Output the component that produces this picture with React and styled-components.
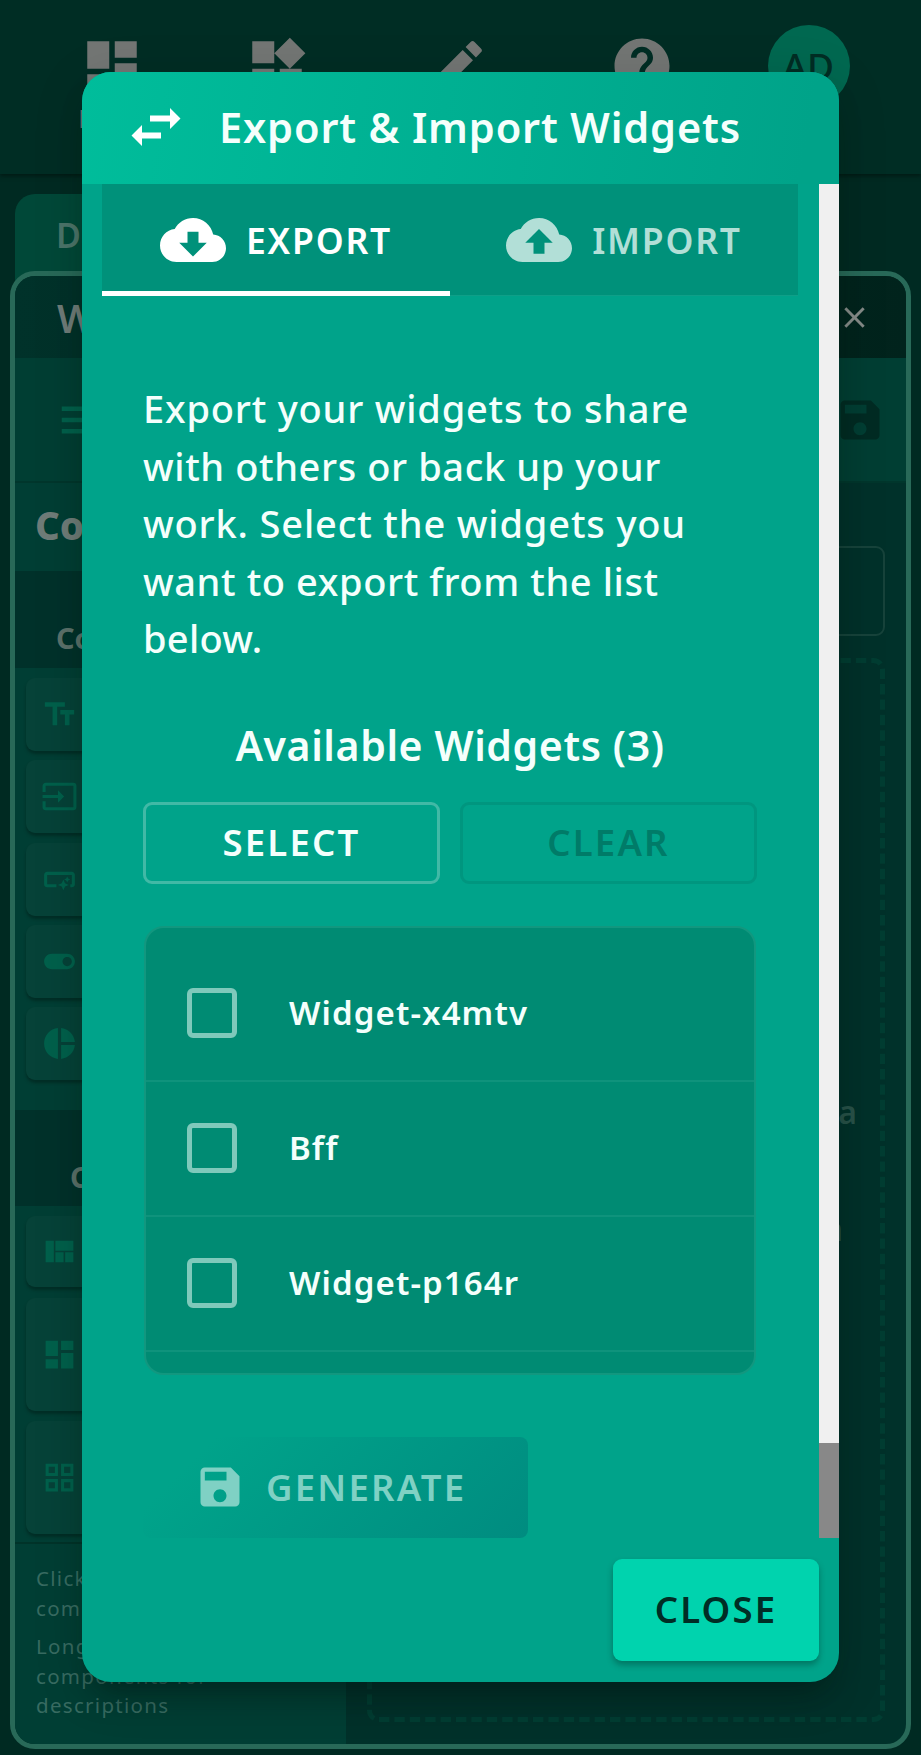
import React from 'react';
import styled, { createGlobalStyle } from 'styled-components';
import {
  MdDashboard, MdWidgets, MdEdit, MdHelp, MdTextFields, MdInput, MdSmartButton,
  MdToggleOn, MdPieChart, MdViewQuilt, MdGridView, MdSave, MdClose, MdMenu,
} from 'react-icons/md';

const Global = createGlobalStyle`
  *, *::before, *::after { box-sizing: border-box; }
  body { margin: 0; background: #002a22; font-family: "Noto Sans", sans-serif; }
  button { font: inherit; border: 0; padding: 0; background: none; }
  svg { display: block; flex: none; }
`;

const Page = styled.div`
  position: relative;
  width: 921px;
  height: 1755px;
  overflow: hidden;
  background: #002a22;
  color: #6f7c78;
`;
const TopBar = styled.header`
  height: 174px;
  display: flex;
  padding: 25px 0 0 47px;
  background: #002d24;
  box-shadow: 0 2px 4px #001a14;
`;
const NavItem = styled.div`
  width: ${(p) => p.$w}px;
  padding-top: ${(p) => p.$top ?? 0}px;
  display: flex;
  flex-direction: column;
  align-items: center;
  color: #737674;
  font-size: 25px;
  line-height: 38px;
  letter-spacing: 2px;
`;
const Avatar = styled.div`
  width: 82px;
  height: 82px;
  border-radius: 50%;
  background: #006850;
  color: #002d24;
  font-size: 37px;
  font-weight: 500;
  letter-spacing: 0;
  line-height: 82px;
  text-align: center;
`;
const PageTab = styled.div`
  width: 300px;
  height: 97px;
  margin: 20px 0 0 15px;
  padding: 17px 0 0 41px;
  border-radius: 20px 20px 0 0;
  background: #004838;
  color: #4c756a;
  font-size: 34px;
  line-height: 49px;
  font-weight: 600;
`;
const Window = styled.section`
  margin: -20px 10px 0;
  height: 1478px;
  display: flex;
  flex-direction: column;
  position: relative;
  border: 5px solid #286958;
  border-radius: 25px;
  overflow: hidden;
  background: #00312a;
`;
const TitleBar = styled.div`
  height: 82px;
  flex: none;
  display: flex;
  align-items: center;
  justify-content: space-between;
  padding: 0 34px 0 42px;
  background: linear-gradient(90deg, #00322a, #01231c);
  font-size: 40px;
  font-weight: 600;
`;
const ToolBar = styled.div`
  height: 125px;
  flex: none;
  display: flex;
  align-items: center;
  justify-content: space-between;
  padding: 0 20px 0 40px;
  background: #003e33;
  border-bottom: 2px solid #00362c;
  color: #00604b;
`;
const Workspace = styled.div`
  flex: 1;
  min-height: 0;
  display: flex;
`;
const Sidebar = styled.aside`
  width: 332px;
  background: #003e34;
`;
const SideTitle = styled.h2`
  margin: 0;
  height: 88px;
  padding: 0 20px;
  line-height: 85px;
  font-size: 38.5px;
  font-weight: 800;
`;
const SideHeading = styled.h3`
  margin: 0;
  height: ${(p) => p.$h}px;
  padding: 44px 0 0 ${(p) => p.$inset}px;
  line-height: 46px;
  font-size: 29px;
  font-weight: 700;
  background: #00312a;
  color: #5c716a;
`;
const Blocks = styled.div`
  display: flex;
  flex-direction: column;
  gap: ${(p) => p.$gap}px;
  padding: 10px 11px ${(p) => p.$bottom}px;
`;
const Block = styled.div`
  height: ${(p) => p.$h}px;
  display: flex;
  align-items: center;
  padding-left: 15px;
  border-radius: 9px;
  background: #064238;
  box-shadow: 0 3px 3px #002e26;
  color: #00604b;
`;
const Hints = styled.div`
  border-top: 2px solid #003329;
  padding: 20px 21px;
  font-size: 20.5px;
  line-height: 29.6px;
  letter-spacing: 1.3px;
  color: #386b61;
  p { margin: 0 0 9px; }
`;
const Canvas = styled.main`
  flex: 1;
  display: flex;
  flex-direction: column;
  gap: 22px;
  padding: 63px 21px 22px;
`;
const NameField = styled.div`
  height: 92px;
  border: 2px solid #17433b;
  border-radius: 9px;
`;
const DropSvg = styled.svg`
  width: 518px;
  height: 1064px;
`;
const DropZone = styled.div`
  position: relative;
`;
const DropText = styled.span`
  position: absolute;
  top: ${(p) => p.$top}px;
  right: ${(p) => p.$right}px;
  font-size: 32px;
  font-weight: 600;
  line-height: 40px;
  color: #285249;
`;

const Dialog = styled.div`
  position: absolute;
  left: 82px;
  top: 72px;
  width: 757px;
  height: 1610px;
  display: flex;
  flex-direction: column;
  border-radius: 29px;
  overflow: hidden;
  background: #00a38a;
  color: #f4fffc;
`;
const Shade = styled.div`
  position: absolute;
  left: 82px;
  top: 72px;
  width: 757px;
  height: 1610px;
  border-radius: 29px;
  box-shadow: 0 22px 30px -14px rgba(0, 20, 16, .5), 0 10px 50px rgba(0, 20, 16, .15);
`;
const DialogHead = styled.div`
  height: 112px;
  flex: none;
  display: flex;
  align-items: center;
  gap: 38px;
  padding: 0 49px 2px;
  background: linear-gradient(100deg, #00bd9b, #00a389 95%);
`;
const DialogTitle = styled.h1`
  margin: 0;
  font-size: 41.5px;
  font-weight: 600;
  letter-spacing: .85px;
  white-space: nowrap;
`;
const Scroller = styled.div`
  height: 1354px;
  flex: none;
  display: flex;
  overflow: hidden;
`;
const Content = styled.div`
  width: 737px;
  padding: 0 21px 0 20px;
`;
const Track = styled.div`
  width: 20px;
  display: flex;
  align-items: flex-end;
  background: #f0f0f0;
`;
const Thumb = styled.div`
  width: 20px;
  height: 95px;
  background: #888;
`;
const Tabs = styled.div`
  height: 112px;
  display: flex;
  background: #00917a;
  border-bottom: 1px solid #0f9f88;
`;
const Tab = styled.button`
  flex: 1;
  height: 112px;
  display: flex;
  align-items: center;
  justify-content: center;
  gap: 20px;
  padding-top: 4px;
  border-bottom: 5px solid ${(p) => (p.$active ? '#fff' : 'transparent')};
  color: ${(p) => (p.$active ? '#fff' : '#b2dfd7')};
  font-size: 35.5px;
  font-weight: 600;
  letter-spacing: 1.8px;
`;
const Panel = styled.div`
  padding: 84px 41px 0;
`;
const Intro = styled.p`
  margin: 0;
  font-size: 38px;
  font-weight: 500;
  line-height: 57.6px;
  letter-spacing: ${(p) => p.$ls}px;
  white-space: nowrap;
`;
const Subhead = styled.h2`
  margin: 47px 0 26px;
  text-align: center;
  font-size: 41px;
  line-height: 61px;
  font-weight: 600;
  letter-spacing: .6px;
  white-space: nowrap;
`;
const ButtonRow = styled.div`
  display: flex;
  gap: 20px;
`;
const OutlineButton = styled.button`
  flex: 1;
  height: 82px;
  padding-bottom: 2px;
  border: 3px solid ${(p) => (p.$off ? '#00967f' : '#41b9a6')};
  border-radius: 9px;
  color: ${(p) => (p.$off ? '#007b68' : '#f4fffc')};
  font-size: 36.5px;
  font-weight: 600;
  letter-spacing: 2.2px;
`;
const List = styled.div`
  margin: 42px 1px 0;
  height: 449px;
  padding-top: 19px;
  border: 2px solid #12977f;
  border-radius: 20px;
  background: #008b73;
`;
const ListRow = styled.label`
  height: 135px;
  display: flex;
  align-items: center;
  gap: 52px;
  padding-left: 41px;
  border-bottom: 2px solid #0f937c;
  font-size: 33px;
  font-weight: 600;
  letter-spacing: 1.1px;
`;
const Box = styled.span`
  width: 50px;
  height: 50px;
  border: 5.5px solid #7fc9bb;
  border-radius: 6px;
`;
const RowText = styled.span`
  padding-bottom: 2px;
`;
const Generate = styled.button`
  margin-top: 62px;
  width: 385px;
  height: 101px;
  display: flex;
  align-items: center;
  gap: 20px;
  padding-left: 51px;
  border-radius: 8px;
  background: linear-gradient(135deg, #00a38a 15%, #008c80);
  color: #7fd1c4;
  font-size: 36.5px;
  font-weight: 600;
  letter-spacing: 2.2px;
`;
const Actions = styled.div`
  display: flex;
  justify-content: flex-end;
  padding: 21px 20px;
`;
const Close = styled.button`
  width: 206px;
  height: 102px;
  padding-bottom: 3px;
  border-radius: 9px;
  background: #00d3ae;
  box-shadow: 0 4px 6px rgba(0, 50, 40, .4);
  color: #002d25;
  font-size: 36.5px;
  font-weight: 600;
  letter-spacing: 2.2px;
`;

const Swap = () => (
  <svg width="50" height="38" viewBox="0 0 50 38" fill="#fff">
    <path d="M39 0l10.500 10.500L39 21v-7.500H19v-6h20zM11 17v7.500h19v6H11V38L.5 27.500z" />
  </svg>
);
const Cloud = ({ up }) => (
  <svg width="66" height="66" viewBox="0 0 24 24" fill="currentColor">
    {up
      ? <path d="M19.350 10.040C18.670 6.590 15.640 4 12 4 9.110 4 6.600 5.640 5.350 8.040 2.340 8.360 0 10.910 0 14c0 3.310 2.690 6 6 6h13c2.760 0 5-2.240 5-5 0-2.640-2.050-4.780-4.650-4.960zM14 13v4h-4v-4H7l5-5 5 5h-3z" />
      : <path d="M19.350 10.040C18.670 6.590 15.640 4 12 4 9.110 4 6.600 5.640 5.350 8.040 2.340 8.360 0 10.910 0 14c0 3.310 2.690 6 6 6h13c2.760 0 5-2.240 5-5 0-2.640-2.050-4.780-4.650-4.960zM17 13l-5 5-5-5h3V9h4v4h3z" />}
  </svg>
);

const controls = [MdTextFields, MdInput, MdSmartButton, MdToggleOn, MdPieChart];
const layouts = [[MdViewQuilt, 71], [MdDashboard, 113], [MdGridView, 113]];
const widgets = ['Widget-x4mtv', 'Bff', 'Widget-p164r'];
const intro = [
  ['Export your widgets to share', 0.8],
  ['with others or back up your', 0.6],
  ['work. Select the widgets you', 0.85],
  ['want to export from the list', 0.6],
  ['below.', 0.3],
];

export default function App() {
  return (
    <Page>
      <Global />
      <TopBar>
        <NavItem $w={130} $top={8}><MdDashboard size={66} />Dash</NavItem>
        <NavItem $w={200} $top={8}><MdWidgets size={66} /></NavItem>
        <NavItem $w={160} $top={8}><MdEdit size={66} /></NavItem>
        <NavItem $w={209} $top={8}><MdHelp size={66} /></NavItem>
        <NavItem $w={125}><Avatar>AD</Avatar>User</NavItem>
      </TopBar>
      <PageTab>Dashboard</PageTab>
      <Window>
        <TitleBar>Widget <MdClose size={35} color="#858b88" /></TitleBar>
        <ToolBar><MdMenu size={54} /><MdSave size={52} color="#002b23" /></ToolBar>
        <Workspace>
          <Sidebar>
            <SideTitle>Com</SideTitle>
            <SideHeading $h={97} $inset={41}>Con</SideHeading>
            <Blocks $gap={9.25} $bottom={30}>
              {controls.map((Icon, i) => <Block key={i} $h={73}><Icon size={37} /></Block>)}
            </Blocks>
            <SideHeading $h={96} $inset={55}>Con</SideHeading>
            <Blocks $gap={10.5} $bottom={8}>
              {layouts.map(([Icon, h], i) => <Block key={i} $h={h}><Icon size={37} /></Block>)}
            </Blocks>
            <Hints>
              <p>Click to add<br />components</p>
              <p>Long press<br />components for<br />descriptions</p>
            </Hints>
          </Sidebar>
          <Canvas>
            <NameField />
            <DropZone>
              <DropSvg viewBox="0 0 518 1064">
                <rect x="2.500" y="2.500" width="513" height="1059" rx="9" fill="none" stroke="#003d32" strokeWidth="5" strokeDasharray="10.400 5" />
              </DropSvg>
              <DropText $top={434} $right={28}>a</DropText>
              <DropText $top={551} $right={42}>a</DropText>
            </DropZone>
          </Canvas>
        </Workspace>
      </Window>
      <Shade />
      <Dialog>
        <DialogHead><Swap /><DialogTitle>Export &amp; Import Widgets</DialogTitle></DialogHead>
        <Scroller>
          <Content>
            <Tabs>
              <Tab $active><Cloud />EXPORT</Tab>
              <Tab><Cloud up />IMPORT</Tab>
            </Tabs>
            <Panel>
              {intro.map(([t, ls]) => <Intro key={t} $ls={ls}>{t}</Intro>)}
              <Subhead>Available Widgets (3)</Subhead>
              <ButtonRow>
                <OutlineButton>SELECT</OutlineButton>
                <OutlineButton $off>CLEAR</OutlineButton>
              </ButtonRow>
              <List>
                {widgets.map((w) => <ListRow key={w}><Box /><RowText>{w}</RowText></ListRow>)}
              </List>
              <Generate><MdSave size={52} />GENERATE</Generate>
            </Panel>
          </Content>
          <Track><Thumb /></Track>
        </Scroller>
        <Actions><Close>CLOSE</Close></Actions>
      </Dialog>
    </Page>
  );
}
